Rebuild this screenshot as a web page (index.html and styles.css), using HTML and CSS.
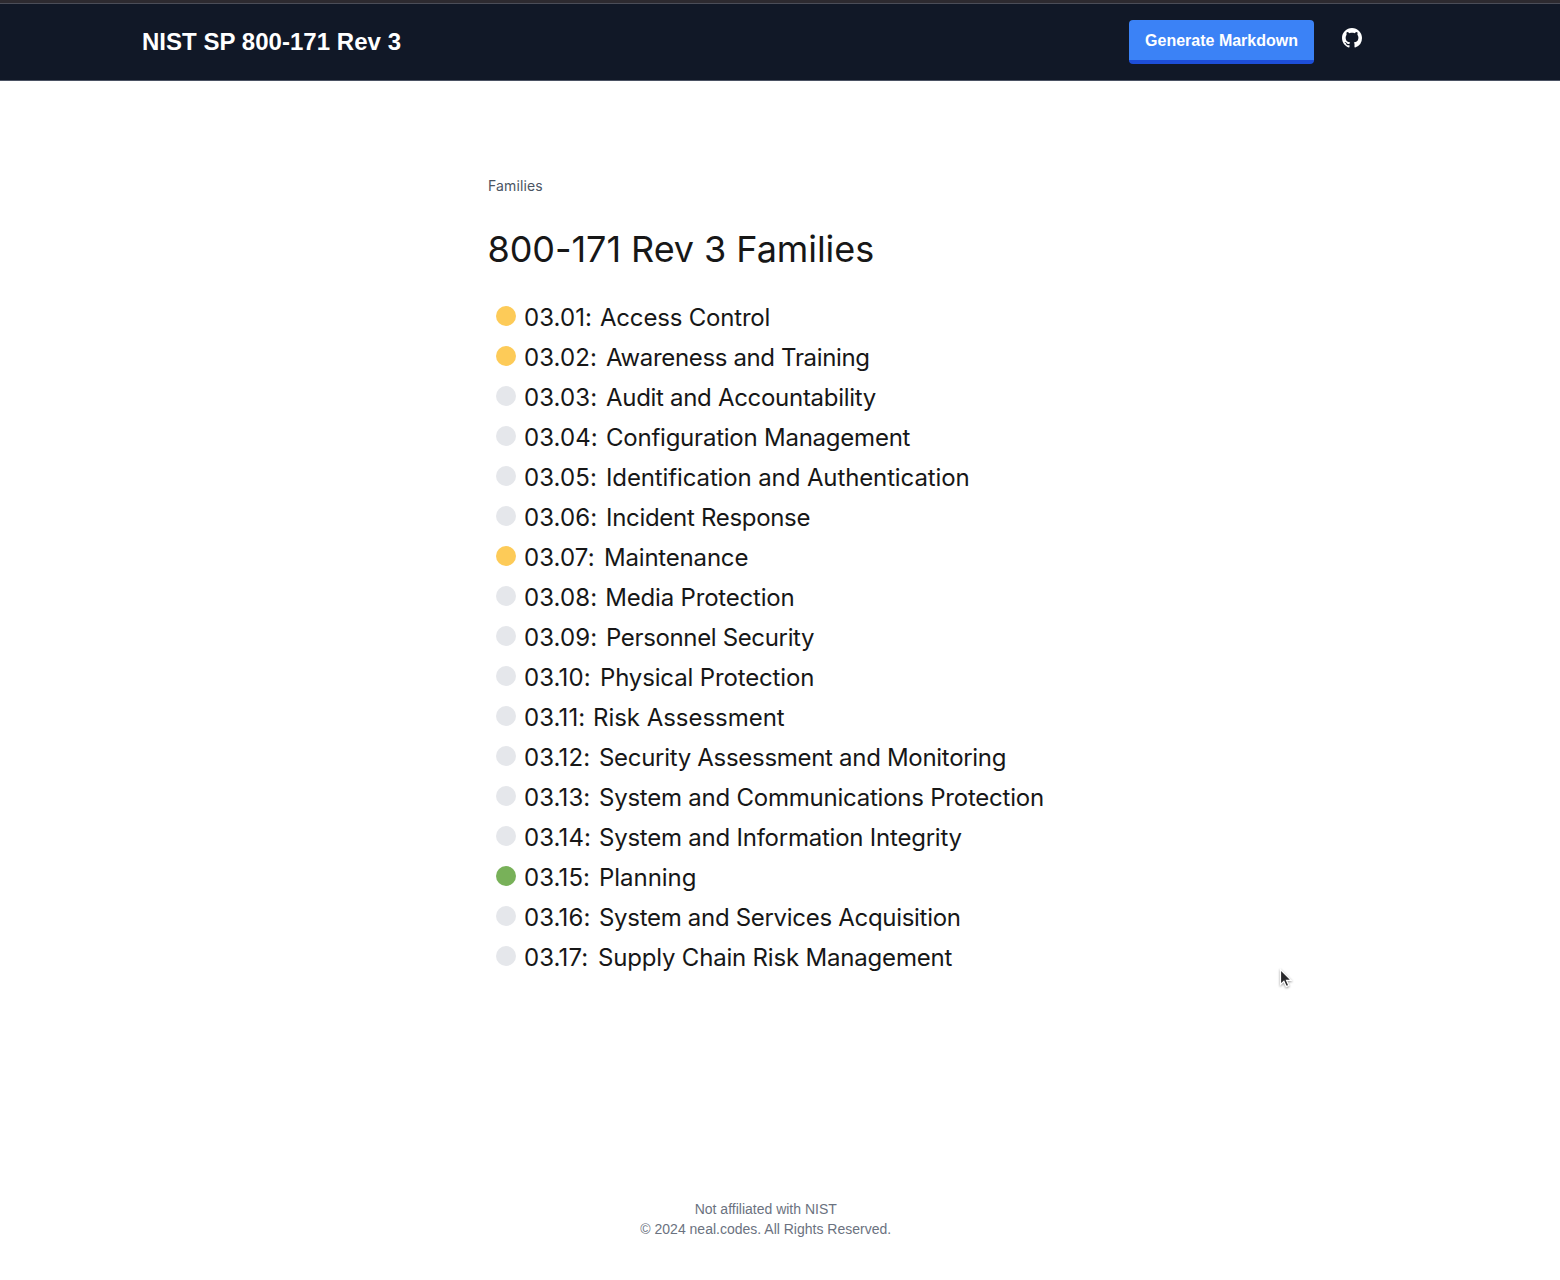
FILE: index.html
```html
<!DOCTYPE html>
<html lang="en">
<head>
<meta charset="utf-8">
<title>NIST SP 800-171 Rev 3</title>
<link rel="stylesheet" href="styles.css">
</head>
<body>
<header class="header">
  <div class="brand">NIST SP 800-171 Rev 3</div>
  <div class="actions">
    <button class="button">Generate Markdown</button>
    <a class="github" aria-label="GitHub"><svg width="20" height="20" viewBox="0 0 16 16" fill="currentColor"><path d="M8 0C3.58 0 0 3.58 0 8c0 3.54 2.29 6.53 5.47 7.59.4.07.55-.17.55-.38 0-.19-.01-.82-.01-1.49-2.01.37-2.53-.49-2.69-.94-.09-.23-.48-.94-.82-1.13-.28-.15-.68-.52-.01-.53.63-.01 1.08.58 1.23.82.72 1.21 1.87.87 2.33.66.07-.52.28-.87.51-1.07-1.78-.2-3.64-.89-3.64-3.95 0-.87.31-1.59.82-2.15-.08-.2-.36-1.02.08-2.12 0 0 .67-.21 2.2.82.64-.18 1.32-.27 2-.27s1.36.09 2 .27c1.53-1.04 2.2-.82 2.2-.82.44 1.1.16 1.92.08 2.12.51.56.82 1.27.82 2.15 0 3.07-1.87 3.75-3.65 3.95.29.25.54.73.54 1.48 0 1.07-.01 1.93-.01 2.2 0 .21.15.46.55.38A8.01 8.01 0 0 0 16 8c0-4.42-3.58-8-8-8z"/></svg></a>
  </div>
</header>
<main class="main">
  <nav class="crumb">Families</nav>
  <h1 class="title">800-171 Rev 3 Families</h1>
  <ul class="families">
    <li class="family"><i class="dot partial"></i><span class="num n76">03.01:</span><span class="t20">Access Control</span></li>
    <li class="family"><i class="dot partial"></i><span class="num">03.02:</span><span class="t35">Awareness and Training</span></li>
    <li class="family"><i class="dot"></i><span class="num">03.03:</span><span class="t30">Audit and Accountability</span></li>
    <li class="family"><i class="dot"></i><span class="num">03.04:</span><span class="t23">Configuration Management</span></li>
    <li class="family"><i class="dot"></i><span class="num">03.05:</span><span class="t12">Identification and Authentication</span></li>
    <li class="family"><i class="dot"></i><span class="num">03.06:</span><span class="t30">Incident Response</span></li>
    <li class="family"><i class="dot partial"></i><span class="num n80">03.07:</span><span class="t20">Maintenance</span></li>
    <li class="family"><i class="dot"></i><span class="num n81">03.08:</span><span class="t20">Media Protection</span></li>
    <li class="family"><i class="dot"></i><span class="num">03.09:</span><span class="t35">Personnel Security</span></li>
    <li class="family"><i class="dot"></i><span class="num n76">03.10:</span><span class="t15">Physical Protection</span></li>
    <li class="family"><i class="dot"></i><span class="num n69">03.11:</span><span class="t5">Risk Assessment</span></li>
    <li class="family"><i class="dot"></i><span class="num n75">03.12:</span><span class="t30">Security Assessment and Monitoring</span></li>
    <li class="family"><i class="dot"></i><span class="num n75">03.13:</span><span class="t23">System and Communications Protection</span></li>
    <li class="family"><i class="dot"></i><span class="num n75">03.14:</span><span class="t23">System and Information Integrity</span></li>
    <li class="family"><i class="dot done"></i><span class="num n75">03.15:</span><span class="t5">Planning</span></li>
    <li class="family"><i class="dot"></i><span class="num n75">03.16:</span><span class="t30">System and Services Acquisition</span></li>
    <li class="family"><i class="dot"></i><span class="num n74">03.17:</span><span class="t20">Supply Chain Risk Management</span></li>
  </ul>
</main>
<footer class="footer">
  <div>Not affiliated with NIST</div>
  <div>© 2024 neal.codes. All Rights Reserved.</div>
</footer>
<svg class="cursor" width="14" height="22" viewBox="0 0 14 22"><path d="M1.5 1.5v15l3.4-3.2 2.3 5.3 2.6-1.1-2.3-5.2h4.7z" fill="#29292c" stroke="#fff" stroke-width="1.2"/></svg>
</body>
</html>
```
FILE: styles.css
```css
* { box-sizing: border-box; }
body {
  margin: 0;
  min-height: 1280px;
  display: flex;
  flex-direction: column;
  background: #fff;
  color: #171717;
  font-family: "Liberation Sans", Arial, sans-serif;
}
.header {
  height: 81px;
  padding: 0 198px 0 142px;
  display: flex;
  align-items: center;
  justify-content: space-between;
  background: #111827;
  border-top: 3px solid #2d2a30;
  border-bottom: 1px solid #4b5263;
  box-shadow: inset 0 1px #4b4d58;
  color: #fff;
}
.brand { font-size: 24px; line-height: 32px; font-weight: 700; letter-spacing: .03px; }
.actions { display: flex; gap: 28px; align-items: center; }
.button {
  height: 44px;
  padding: 9px 16px 7px;
  border: 0;
  border-bottom: 4px solid #1d4ed8;
  border-radius: 4px;
  background: #3b82f6;
  color: #fff;
  font: 700 16px/24px "Liberation Sans", Arial, sans-serif;
}
.github { height: 28px; color: #fff; }
.github svg { display: block; }
.main {
  width: 600px;
  margin: 95px 0 0 487px;
  font-family: Inter, sans-serif;
}
.crumb { padding-left: 1px; font-size: 14px; line-height: 20px; letter-spacing: .12px; color: #4b5563; }
.title { margin: 33px 0 29px; font-size: 36px; line-height: 40px; font-weight: 400; text-indent: .5px; letter-spacing: -.06px; }
.families { list-style: none; margin: 0; padding: 0 0 0 9px; }
.family { display: flex; height: 40px; font-size: 24px; line-height: 40px; white-space: nowrap; }
.dot { width: 20.4px; height: 20.4px; margin: 7.7px 7.6px 0 0; border-radius: 50%; background: #e5e7eb; }
.partial { background: #fdcb58; }
.done { background: #78b159; }
.num { width: 82px; letter-spacing: .1px; }
.n81 { width: 81.3px; }
.n80 { width: 80px; }
.n76 { width: 76px; }
.n75 { width: 75px; }
.n74 { width: 74px; }
.n69 { width: 69px; }
.t5 { letter-spacing: -.03px; }
.t12 { letter-spacing: -.12px; }
.t15 { letter-spacing: -.15px; }
.t20 { letter-spacing: -.19px; }
.t23 { letter-spacing: -.23px; }
.t30 { letter-spacing: -.3px; }
.t35 { letter-spacing: -.35px; }
.footer {
  margin-top: auto;
  padding: 0 28.5px 41px 0;
  color: #6b7280;
  font-size: 14px;
  line-height: 20px;
  text-align: center;
}
.cursor { position: absolute; left: 1279px; top: 968px; filter: drop-shadow(0 1px 1px rgba(0, 0, 0, .4)); }
```
